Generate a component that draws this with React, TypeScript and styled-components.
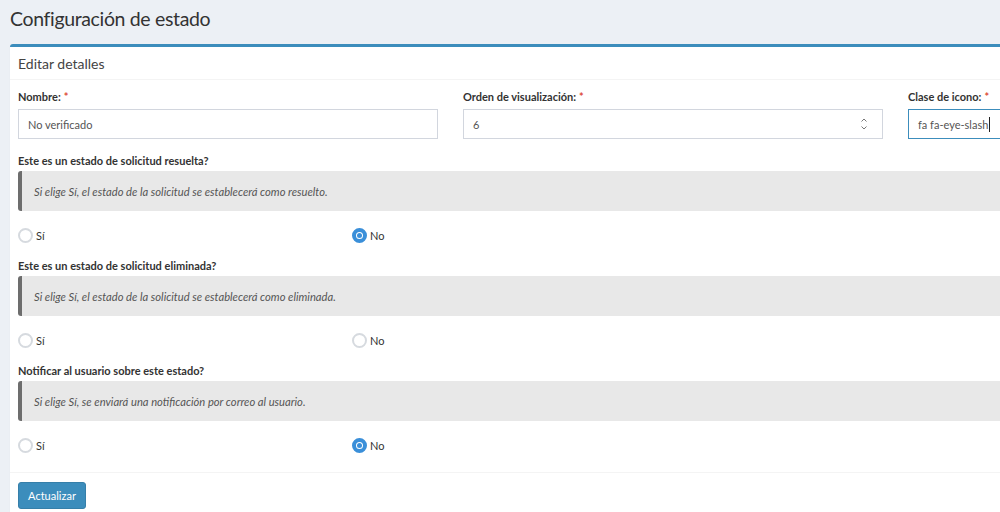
import React from "react";
import styled, { createGlobalStyle } from "styled-components";

const Global = createGlobalStyle`
  html, body { margin: 0; padding: 0; }
  body {
    background: #ecf0f5;
    font-family: "Lato", "Liberation Sans", sans-serif;
    color: #333;
    overflow: hidden;
    width: 1000px;
    height: 512px;
  }
  * { box-sizing: border-box; }
`;

const Page = styled.div`
  padding: 0 10px;
  width: 1400px;
`;

const Title = styled.h1`
  margin: 0;
  padding-top: 5px;
  height: 44px;
  font-size: 19.5px;
  letter-spacing: -0.35px;
  line-height: 28px;
  font-weight: 400;
  color: #333;
`;

const Box = styled.div`
  background: #fff;
  border-top: 3px solid #3c8dbc;
  border-radius: 3px 0 0 0;
  width: 1352px;
  box-shadow: 0 1px 1px rgba(0, 0, 0, 0.1);
`;

const BoxHeader = styled.div`
  height: 33px;
  padding: 0 8px;
  display: flex;
  align-items: center;
  border-bottom: 1px solid #f4f4f4;
  font-size: 14px;
  color: #444;
`;

const BoxBody = styled.div`
  padding: 8px 8px 18px 8px;
`;

const FieldRow = styled.div`
  display: grid;
  grid-template-columns: 420px 420px 420px;
  column-gap: 25px;
  margin-bottom: 13px;
`;

const Label = styled.div`
  font-size: 11px;
  font-weight: 700;
  line-height: 17px;
  height: 17px;
  color: #333;
  margin-bottom: 4px;
`;

const Req = styled.span`
  color: #dd4b39;
  margin-left: 3px;
`;

const Field = styled.div<{ $focus?: boolean }>`
  position: relative;
  height: 30px;
  border: 1px solid ${(p) => (p.$focus ? "#3c8dbc" : "#d2d6de")};
  padding: 0 9px;
  display: flex;
  align-items: center;
  font-size: 11px;
  color: #555;
  background: #fff;
`;

const Caret = styled.span`
  display: inline-block;
  width: 1px;
  height: 15px;
  background: #222;
  margin-left: 1px;
`;

const Spinner = styled.svg`
  position: absolute;
  right: 14px;
  top: 7px;
`;

const Section = styled.div`
  margin-bottom: 13px;
  &:last-child {
    margin-bottom: 0;
  }
`;

const QLabel = styled(Label)`
  margin-bottom: 2px;
`;

const Callout = styled.div`
  height: 40px;
  background: #e8e8e8;
  border-left: 4px solid #6d6d6d;
  border-radius: 3px 0 0 3px;
  padding-left: 12px;
  display: flex;
  align-items: center;
  font-size: 11.2px;
  font-style: italic;
  color: #555;
  margin-bottom: 16px;
`;

const RadioRow = styled.div`
  display: grid;
  grid-template-columns: 334px 334px;
  height: 17px;
  padding-bottom: 1px;
`;

const RadioItem = styled.label`
  display: flex;
  align-items: center;
  gap: 3px;
  font-size: 11px;
  color: #333;
`;

const RadioDot = styled.span<{ $on?: boolean }>`
  width: 15px;
  height: 15px;
  border-radius: 50%;
  border: ${(p) => (p.$on ? "4px solid #3a8fd9" : "2px solid #d6dadf")};
  background: #fff;
  display: flex;
  align-items: center;
  justify-content: center;
  &::after {
    content: "";
    display: ${(p) => (p.$on ? "block" : "none")};
    width: 5px;
    height: 5px;
    border-radius: 50%;
    background: #3a8fd9;
  }
`;

const BoxFooter = styled.div`
  border-top: 1px solid #f4f4f4;
  padding: 9px 8px 10px 8px;
`;

const Button = styled.button`
  height: 27px;
  width: 68px;
  background: #3c8dbc;
  border: 1px solid #367fa9;
  border-radius: 3px;
  color: #fff;
  font-family: inherit;
  font-size: 11px;
  padding: 0;
`;

const questions = [
  {
    q: "Este es un estado de solicitud resuelta?",
    hint: "Si elige Sí, el estado de la solicitud se establecerá como resuelto.",
    yes: false,
  },
  {
    q: "Este es un estado de solicitud eliminada?",
    hint: "Si elige Sí, el estado de la solicitud se establecerá como eliminada.",
    yes: null,
  },
  {
    q: "Notificar al usuario sobre este estado?",
    hint: "Si elige Sí, se enviará una notificación por correo al usuario.",
    yes: false,
  },
];

export default function App() {
  return (
    <>
      <Global />
      <Page>
        <Title>Configuración de estado</Title>
        <Box>
          <BoxHeader>Editar detalles</BoxHeader>
          <BoxBody>
            <FieldRow>
              <div>
                <Label>
                  Nombre:<Req>*</Req>
                </Label>
                <Field>No verificado</Field>
              </div>
              <div>
                <Label>
                  Orden de visualización:<Req>*</Req>
                </Label>
                <Field>
                  6
                  <Spinner width="8" height="14" viewBox="0 0 8 14">
                    <path d="M1.5 4.5 L4 2 L6.5 4.5" fill="none" stroke="#777" strokeWidth="1" />
                    <path d="M1.5 9.5 L4 12 L6.5 9.5" fill="none" stroke="#777" strokeWidth="1" />
                  </Spinner>
                </Field>
              </div>
              <div>
                <Label>
                  Clase de icono:<Req>*</Req>
                </Label>
                <Field $focus>
                  fa fa-eye-slash
                  <Caret />
                </Field>
              </div>
            </FieldRow>
            {questions.map((s, i) => (
              <Section key={i}>
                <QLabel>{s.q}</QLabel>
                <Callout>{s.hint}</Callout>
                <RadioRow>
                  <RadioItem>
                    <RadioDot $on={s.yes === true} />
                    Sí
                  </RadioItem>
                  <RadioItem>
                    <RadioDot $on={s.yes === false} />
                    No
                  </RadioItem>
                </RadioRow>
              </Section>
            ))}
          </BoxBody>
          <BoxFooter>
            <Button>Actualizar</Button>
          </BoxFooter>
        </Box>
      </Page>
    </>
  );
}
